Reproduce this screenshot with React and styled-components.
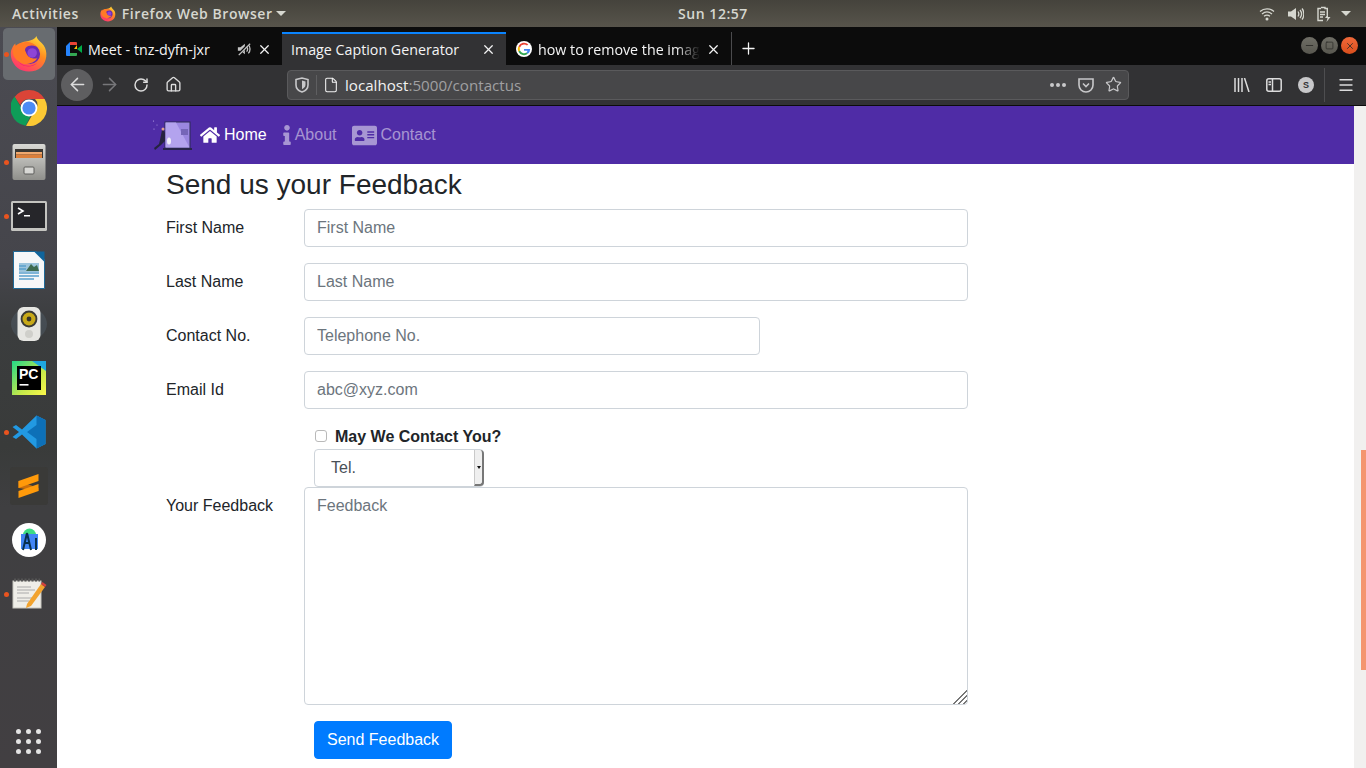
import styled, { createGlobalStyle } from "styled-components";
import { FaHome, FaInfo, FaAddressCard } from "react-icons/fa";
import {
  ArrowLeft,
  ArrowRight,
  RotateCw,
  House,
  File,
  Star,
  Menu,
  Plus,
  X,
  Minus,
  Square,
} from "lucide-react";

const Global = createGlobalStyle`
  html, body {
    margin: 0;
    height: 100%;
    overflow: hidden;
    font-family: "Liberation Sans", Arial, sans-serif;
    background: #fff;
  }
  * { box-sizing: border-box; }
`;

const Screen = styled.div`
  width: 1366px;
  height: 768px;
  display: flex;
  flex-direction: column;
  overflow: hidden;
`;

const TopBar = styled.div`
  height: 27px;
  flex: none;
  display: grid;
  grid-template-columns: 666px auto 1fr;
  align-items: center;
  padding: 0 12px;
  background: linear-gradient(#45433c, #57544b);
  color: #d6d7d0;
  font: 600 14px "Open Sans", sans-serif;
  letter-spacing: 0.55px;
`;

const TopLeft = styled.div`
  display: flex;
  align-items: center;
`;

const AppMenu = styled.div`
  display: flex;
  align-items: center;
  gap: 6px;
  margin-left: 21px;
`;

const Caret = styled.span`
  width: 0;
  height: 0;
  margin-left: ${(p) => p.$gap || 0}px;
  border-left: 5px solid transparent;
  border-right: 5px solid transparent;
  border-top: 5px solid #d6d7d0;
`;

const Tray = styled.div`
  display: flex;
  align-items: center;
  justify-content: flex-end;
  gap: 13px;
  padding-right: 3px;
`;

const Desktop = styled.div`
  flex: 1;
  display: flex;
  min-height: 0;
`;

const Dock = styled.div`
  width: 57px;
  flex: none;
  display: flex;
  flex-direction: column;
  align-items: center;
  background: linear-gradient(
    #4b4b52 0,
    #45454b 240px,
    #3b3d3e 300px,
    #393b3a 420px,
    #3f3f41 480px,
    #423f42 100%
  );
`;

const DockItem = styled.div`
  position: relative;
  width: 52px;
  height: 54px;
  flex: none;
  display: flex;
  align-items: center;
  justify-content: center;
  border-radius: 5px;
  border-top: 1px solid transparent;
  border-bottom: 1px solid transparent;
  background: ${(p) => (p.$active ? "#686c70" : "transparent")};
  background-clip: padding-box;
`;

const RunDot = styled.span`
  position: absolute;
  left: 1px;
  top: 24px;
  width: 5px;
  height: 5px;
  border-radius: 50%;
  background: #e9541f;
`;

const AppGrid = styled.div`
  margin-top: auto;
  margin-bottom: 14px;
  display: grid;
  grid-template-columns: repeat(3, 5px);
  gap: 5px;
`;

const GridDot = styled.span`
  width: 5px;
  height: 5px;
  border-radius: 50%;
  background: #e4e4e4;
`;

const Browser = styled.div`
  flex: 1;
  min-width: 0;
  display: flex;
  flex-direction: column;
`;

const TabStrip = styled.div`
  height: 38px;
  flex: none;
  display: flex;
  padding-top: 5px;
  background: #0c0c0c;
  color: #f4f4f4;
  font: 400 14.25px "Open Sans", sans-serif;
`;

const Tab = styled.div`
  width: ${(p) => p.$width}px;
  flex: none;
  display: flex;
  align-items: center;
  padding: 0 10px 1px ${(p) => p.$left || 9}px;
  gap: 6px;
  white-space: nowrap;
  background: ${(p) => (p.$active ? "#323234" : "transparent")};
  border-top: 2px solid ${(p) => (p.$active ? "#0a84ff" : "transparent")};
`;

const TabTitle = styled.span`
  flex: 1;
  overflow: hidden;
  min-width: 0;
  ${(p) =>
    p.$fade &&
    "mask-image: linear-gradient(to right, #000 85%, transparent 100%);"}
`;

const TabDivider = styled.span`
  width: 1px;
  align-self: stretch;
  background: #4b4b4d;
`;

const NewTab = styled.span`
  margin-left: 7px;
  display: flex;
  align-items: center;
`;

const WindowButtons = styled.div`
  margin-left: auto;
  padding: 0 8px 6px 0;
  display: flex;
  align-items: center;
  gap: 3px;
`;

const WindowButton = styled.span`
  width: 17px;
  height: 17px;
  border-radius: 50%;
  display: flex;
  align-items: center;
  justify-content: center;
  color: #2e2d29;
  background: ${(p) =>
    p.$close
      ? "linear-gradient(#f0693a, #d84e1c)"
      : "linear-gradient(#6f6e66, #58574f)"};
`;

const Toolbar = styled.div`
  height: 41px;
  flex: none;
  display: flex;
  align-items: center;
  padding: 0 0 1px 4px;
  background: #323234;
  border-bottom: 1px solid #0c0c0c;
  color: #dcdcdc;
`;

const ToolButton = styled.span`
  width: 32px;
  height: 32px;
  flex: none;
  display: flex;
  align-items: center;
  justify-content: center;
  border-radius: 50%;
  color: ${(p) => (p.$dim ? "#77777a" : "#dcdcdc")};
  background: ${(p) => (p.$round ? "#5e5e60" : "transparent")};
`;

const UrlBar = styled.div`
  width: 842px;
  height: 30px;
  margin: 0 97px 0 98px;
  flex: none;
  display: flex;
  align-items: center;
  padding: 0 6px 0 7px;
  background: #474749;
  border: 1px solid #5a5a5c;
  border-radius: 4px;
  font: 400 15.15px "Open Sans", sans-serif;
  color: #f2f2f2;
`;

const UrlDivider = styled.span`
  width: 1px;
  height: 20px;
  margin: 0 6px 0 7px;
  background: #5f5f61;
`;

const Host = styled.span`
  margin-left: 6px;
`;

const UrlPath = styled.span`
  color: #a0a0a2;
`;

const UrlActions = styled.div`
  margin-left: auto;
  display: flex;
  align-items: center;
  gap: 11px;
  color: #c8c8ca;
`;

const Dots = styled.span`
  width: 17px;
  display: flex;
  gap: 2px;
`;

const Dot = styled.i`
  width: 4px;
  height: 4px;
  border-radius: 50%;
  background: #c8c8ca;
`;

const Avatar = styled.span`
  width: 16px;
  height: 16px;
  border-radius: 50%;
  display: flex;
  align-items: center;
  justify-content: center;
  background: #c8c8ca;
  color: #323234;
  font: 700 9px "Liberation Sans", sans-serif;
`;

const ToolDivider = styled.span`
  width: 1px;
  height: 34px;
  margin: 0 5px 0 2px;
  background: #4e4e50;
`;

const PageArea = styled.div`
  flex: 1;
  min-height: 0;
  display: flex;
`;

const Page = styled.main`
  flex: 1;
  min-width: 0;
  overflow: hidden;
`;

const Scrollbar = styled.div`
  width: 12px;
  flex: none;
  padding-top: 344px;
  padding-left: 7px;
  background: #f1f0ef;
`;

const ScrollThumb = styled.div`
  width: 5px;
  height: 220px;
  background: #f49570;
`;

const NavBar = styled.nav`
  height: 58px;
  display: flex;
  align-items: center;
  padding-left: 95px;
  background: #4f2ca6;
`;

const NavLink = styled.a`
  display: flex;
  align-items: center;
  gap: ${(p) => p.$gap}px;
  margin-left: ${(p) => p.$left}px;
  font-size: 16px;
  color: ${(p) => (p.$active ? "#fff" : "rgba(255, 255, 255, 0.5)")};
`;

const InfoGlyph = styled(FaInfo)`
  width: 8px;
  height: 20px;
`;

const Content = styled.div`
  padding-left: 109px;
  width: 911px;
  color: #212529;
`;

const Heading = styled.h2`
  margin: 0;
  height: 45px;
  padding-top: 4px;
  font-size: 28px;
  font-weight: 400;
  line-height: 34px;
`;

const FormRow = styled.div`
  display: flex;
  margin-bottom: ${(p) => p.$bottom ?? 16}px;
`;

const Label = styled.label`
  width: 138px;
  flex: none;
  padding-top: 7px;
  font-size: 16px;
  line-height: 24px;
`;

const TextInput = styled.input`
  width: ${(p) => p.$width || 664}px;
  height: 38px;
  padding: 6px 12px;
  border: 1px solid #ced4da;
  border-radius: 4px;
  font: 400 16px "Liberation Sans", sans-serif;
  background: #fff;
  &::placeholder {
    color: #6c757d;
    opacity: 1;
  }
`;

const Feedback = styled(TextInput).attrs({ as: "textarea" })`
  height: 218px;
  resize: both;
  line-height: 24px;
  display: block;
  &::-webkit-resizer {
    background: linear-gradient(
      135deg,
      transparent 0 52%,
      #777 52% 59%,
      transparent 59% 69%,
      #777 69% 76%,
      transparent 76% 86%,
      #777 86% 93%,
      transparent 93%
    );
  }
`;

const CheckRow = styled.div`
  height: 24px;
  margin-left: 149px;
  display: flex;
  align-items: center;
  font-size: 16px;
  font-weight: 700;
`;

const Check = styled.input`
  width: 12px;
  height: 12px;
  margin: 0 8px 2px 0;
  padding: 0;
  appearance: none;
  border: 1px solid #b9b9b9;
  border-radius: 3px;
  background: #fff;
`;

const SelectBox = styled.div`
  width: 170px;
  height: 38px;
  margin-left: 148px;
  display: flex;
  align-items: center;
  padding-left: 16px;
  border: 1px solid #ced4da;
  border-radius: 4px;
  font-size: 16px;
  color: #495057;
  position: relative;
`;

const SelectArrow = styled.span`
  position: absolute;
  right: -1px;
  top: 0;
  bottom: 0;
  width: 10px;
  display: flex;
  align-items: center;
  justify-content: center;
  background: #efefef;
  border-left: 1px solid #c9c9c9;
  border-right: 2px solid #777;
  border-bottom: 2px solid #777;
  border-radius: 0 4px 4px 0;
  &::after {
    content: "";
    border-left: 2.5px solid transparent;
    border-right: 2.5px solid transparent;
    border-top: 3px solid #111;
  }
`;

const SendButton = styled.button`
  display: block;
  height: 38px;
  margin: 16px 0 0 148px;
  padding: 0 12px;
  border: 1px solid #007bff;
  border-radius: 4px;
  background: #007bff;
  color: #fff;
  font: 400 16px "Liberation Sans", sans-serif;
`;

const PyCharmBadge = styled.text`
  font: 700 14px "Liberation Sans", sans-serif;
  fill: #fff;
`;

function FirefoxIcon({ size = 38 }) {
  const id = `fx${size}`;
  return (
    <svg width={size} height={size} viewBox="0 0 36 36">
      <defs>
        <linearGradient id={id} x1="0.8" y1="0" x2="0.2" y2="1">
          <stop offset="0" stopColor="#ffdf3a" />
          <stop offset="0.4" stopColor="#ff8a1f" />
          <stop offset="1" stopColor="#ff2d78" />
        </linearGradient>
      </defs>
      <path
        d="M25 1c1 4 4 5 7 9 4 6 3 15-2 20-6 6-17 6-23 1C2 27 0 21 1 15c1-3 2-5 4-7 0 2 1 3 2 3 2-3 5-5 9-5 4-1 8-2 9-5z"
        fill={`url(#${id})`}
      />
      <circle cx="19" cy="18" r="9.500" fill="#6a2bb3" />
      <path
        d="M3 13c2-3 5-6 10-6 5-1 10 1 12 4-4-2-8-1-10 1-1 1-1 3 0 4 1 4 5 7 11 6-4 6-13 7-18 3-4-3-6-7-5-12z"
        fill="#ff7a26"
      />
      <path d="M7 24c4 6 13 7 19 2-4 5-14 6-19-2z" fill="#f5187a" />
      <circle cx="21" cy="17" r="4.500" fill="#8d45d6" />
    </svg>
  );
}

function ChromeIcon() {
  return (
    <svg width="36" height="36" viewBox="0 0 36 36">
      <path d="M18 0a18 18 0 0 1 15.6 9H18a9 9 0 0 0-8.6 6.5L3.6 7A18 18 0 0 1 18 0z" fill="#db4437" />
      <path d="M3.6 6.500 12 21a8 8 0 0 0 7.500 5.200L14.600 35.700A18 18 0 0 1 3.600 6.500z" fill="#0f9d58" />
      <path d="M33.600 9A18 18 0 0 1 15 35.800L23.500 21A8 8 0 0 0 24 9z" fill="#fcc934" />
      <circle cx="18" cy="18" r="8.400" fill="#fff" />
      <circle cx="18" cy="18" r="6.600" fill="#4c8bf5" />
    </svg>
  );
}

function FilesIcon() {
  return (
    <svg width="34" height="36" viewBox="0 0 34 36">
      <defs>
        <linearGradient id="cabinet" x1="0" y1="0" x2="0" y2="1">
          <stop offset="0" stopColor="#d9d9d5" />
          <stop offset="1" stopColor="#8f8f8b" />
        </linearGradient>
      </defs>
      <rect x="0.500" y="0" width="33" height="36" rx="2" fill="url(#cabinet)" />
      <rect x="3" y="5" width="28" height="9" fill="#3a3733" />
      <rect x="4" y="8" width="26" height="2.500" fill="#f0a86e" />
      <rect x="4" y="10.500" width="26" height="3.500" fill="#dc7f3a" />
      <rect x="12" y="23" width="10" height="7" rx="1" fill="#d8d8d5" stroke="#5c5c5a" />
    </svg>
  );
}

function TerminalIcon() {
  return (
    <svg width="36" height="30" viewBox="0 0 36 30">
      <rect width="36" height="30" rx="1.500" fill="#c4c4c0" />
      <rect x="2" y="2" width="32" height="25" fill="#26262a" />
      <path d="M7 7l5 3-5 3" fill="none" stroke="#fff" strokeWidth="1.600" />
      <rect x="13" y="14" width="6" height="1.500" fill="#fff" />
    </svg>
  );
}

function WriterIcon() {
  return (
    <svg width="32" height="38" viewBox="0 0 32 38">
      <path d="M0.500 0.500H23L31.500 9V37.500H0.500z" fill="#f6f7f8" stroke="#1f6a98" />
      <path d="M21 0.500H31.500V11z" fill="#10659c" />
      <rect x="6" y="12" width="20" height="9" fill="#9cc4dc" />
      <path d="M13 20l5-7 3 3 3-2 2 6z" fill="#3e6a4f" />
      <path d="M6 15h7M6 18h7M6 22h20M6 25h20M6 28h15" stroke="#5aa0cc" strokeWidth="1.600" />
    </svg>
  );
}

function SpeakerIcon() {
  return (
    <svg width="38" height="36" viewBox="0 0 38 36">
      <ellipse cx="19" cy="18" rx="18" ry="16" fill="#5a6a78" opacity="0.350" />
      <rect x="7.500" y="1" width="23" height="34" rx="6" fill="#e6e6e2" />
      <circle cx="19" cy="13" r="8.400" fill="#3a3a36" />
      <circle cx="19" cy="13" r="6.500" fill="#c7a918" />
      <circle cx="19" cy="13" r="2.400" fill="#38352a" />
      <circle cx="19" cy="28" r="4" fill="#cfcfca" />
    </svg>
  );
}

function PyCharmIcon() {
  return (
    <svg width="34" height="34" viewBox="0 0 34 34">
      <defs>
        <linearGradient id="pc" x1="0" y1="0" x2="1" y2="1">
          <stop offset="0" stopColor="#21d789" />
          <stop offset="0.600" stopColor="#c5e94a" />
          <stop offset="1" stopColor="#fcf84a" />
        </linearGradient>
      </defs>
      <rect width="34" height="34" fill="url(#pc)" />
      <path d="M20 0h14v10z" fill="#1ea7df" />
      <rect x="5" y="5" width="24" height="24" fill="#000" />
      <PyCharmBadge x="7" y="18">PC</PyCharmBadge>
      <rect x="7.500" y="23" width="9" height="1.600" fill="#fff" />
    </svg>
  );
}

function VSCodeIcon() {
  return (
    <svg width="34" height="34" viewBox="0 0 34 34">
      <path d="M24.500 0.500 33.500 5V29l-9 4.500L10 19.500l-6 4.600L0.500 22 7 17 0.500 12 4 9.900l6 4.600z" fill="#2299e2" />
      <path d="M24.500 0.500 33.500 5V29l-9 4.500V24L15 17l9.500-7z" fill="#0d70b8" />
    </svg>
  );
}

function SublimeIcon() {
  return (
    <svg width="38" height="38" viewBox="0 0 38 38">
      <rect width="38" height="38" rx="3" fill="#3a3a38" />
      <path d="M8.500 14 28.500 21V24L8.500 21z" fill="#c96f0c" />
      <path d="M8.500 14 28.500 7V14L8.500 21z" fill="#ff9a0a" />
      <path d="M8.500 24 28.500 17V24L8.500 31z" fill="#ff9a0a" />
    </svg>
  );
}

function StudioIcon() {
  return (
    <svg width="34" height="34" viewBox="0 0 34 34">
      <circle cx="17" cy="17" r="17" fill="#fff" />
      <path d="M11 12a6.500 6.500 0 0 1 13 0z" fill="#3ddc84" />
      <rect x="9" y="11" width="17" height="15" fill="#4285f4" />
      <path d="M15 10 11 27M15 10l4 17M12 20h6M24 15v12" stroke="#08304f" strokeWidth="2" fill="none" />
    </svg>
  );
}

function GeditIcon() {
  return (
    <svg width="36" height="32" viewBox="0 0 36 32">
      <rect x="2" y="3" width="28" height="27" fill="#efeee8" stroke="#c8c7bf" />
      <path d="M3 2h26" stroke="#555" strokeWidth="3" strokeDasharray="2 1.500" />
      <path d="M6 9h14M6 12h18M6 15h12M6 20h16M6 23h12" stroke="#aaa" strokeWidth="1" />
      <path d="M16 26 30 6l4 3-14 19-5 2z" fill="#f2a32e" />
      <path d="M30 6l1.500-2 4 3-1.500 2z" fill="#d3413c" />
    </svg>
  );
}

function MeetIcon() {
  return (
    <svg width="16" height="14" viewBox="0 0 16 14">
      <path d="M0 4 4 0v14H1a1 1 0 0 1-1-1z" fill="#2684fc" />
      <path d="M4 0h6a1 1 0 0 1 1 1v2H4z" fill="#ea4335" />
      <path d="M4 11h7v2a1 1 0 0 1-1 1H4z" fill="#34a853" />
      <path d="M4 3h7v8H4z" fill="#0c0c0c" />
      <path d="M11 7l5-4v8z" fill="#00ac47" />
      <path d="M11 3v4H8z" fill="#fbbc04" />
    </svg>
  );
}

function GoogleIcon() {
  return (
    <svg width="16" height="16" viewBox="0 0 16 16">
      <circle cx="8" cy="8" r="8" fill="#fff" />
      <path d="M8 3.500a4.500 4.500 0 0 1 3 1.100l1.300-1.300A6.300 6.300 0 0 0 2.400 5.200L4 6.400A4.400 4.400 0 0 1 8 3.500z" fill="#ea4335" />
      <path d="M2.400 5.200a6.300 6.300 0 0 0 0 5.600L4 9.500a4.400 4.400 0 0 1 0-3.100z" fill="#fbbc05" />
      <path d="M2.400 10.800a6.300 6.300 0 0 0 9.600 1.900l-1.500-1.200A4.400 4.400 0 0 1 4 9.500z" fill="#34a853" />
      <path d="M14.200 8H8v1.800h3.500a3 3 0 0 1-1 1.700l1.500 1.200A6.200 6.200 0 0 0 14.200 8z" fill="#4285f4" />
    </svg>
  );
}

function MutedIcon() {
  return (
    <svg width="14" height="14" viewBox="0 0 16 16" fill="#c4c4c4">
      <path d="M1 6h3l5-4v12l-5-4H1z" />
      <path d="M11 5c1.500 1.500 1.500 4.500 0 6M13 3c2.500 2.500 2.500 7.500 0 10" fill="none" stroke="#c4c4c4" strokeWidth="1.500" />
      <path d="M1 15 15 1" stroke="#0c0c0c" strokeWidth="3" />
      <path d="M2 15 15 2" stroke="#c4c4c4" strokeWidth="1.500" />
    </svg>
  );
}

function ShieldIcon() {
  return (
    <svg width="14" height="16" viewBox="0 0 14 16" fill="none" stroke="#c8c8ca" strokeWidth="1.600">
      <path d="M1 2.500 7 1l6 1.500V8c0 3.500-3 6-6 7-3-1-6-3.500-6-7z" />
      <path d="M7 3.500 10.500 4.500V8c0 2-2 3.500-3.500 4.300z" fill="#c8c8ca" stroke="none" />
    </svg>
  );
}

function PocketIcon() {
  return (
    <svg width="16" height="16" viewBox="0 0 16 16" fill="none" stroke="#c8c8ca" strokeWidth="1.600">
      <path d="M1 2h14v6a7 7 0 0 1-14 0z" />
      <path d="M5 6.500 8 9.500l3-3" />
    </svg>
  );
}

function LibraryIcon() {
  return (
    <svg width="16" height="14" viewBox="0 0 16 14" fill="none" stroke="#dcdcdc" strokeWidth="1.500">
      <path d="M1 0v14M4.500 0v14M8 0v14M10.500 0l4.500 14" />
    </svg>
  );
}

function SidebarIcon() {
  return (
    <svg width="16" height="14" viewBox="0 0 16 14" fill="none" stroke="#dcdcdc" strokeWidth="1.500">
      <rect x="0.800" y="0.800" width="14.400" height="12.400" rx="2" />
      <path d="M6.500 1v12M2.500 4h2.500M2.500 6.500h2.500" />
    </svg>
  );
}

function WifiIcon() {
  return (
    <svg width="16" height="14" viewBox="0 0 16 14" fill="none" stroke="#d6d7d0" strokeWidth="1.300">
      <path d="M1 4.500c4-3.500 10-3.500 14 0M3 7c3-2.500 7-2.500 10 0M5 9.300c2-1.500 4-1.500 6 0" />
      <circle cx="8" cy="12" r="1.500" fill="#d6d7d0" stroke="none" />
    </svg>
  );
}

function SoundIcon() {
  return (
    <svg width="16" height="14" viewBox="0 0 16 14" fill="none" stroke="#d6d7d0" strokeWidth="1.300">
      <path d="M0 4.500h3L8 1v12L3 9.500H0z" fill="#d6d7d0" stroke="none" />
      <path d="M10 4.500c1 1.500 1 3.500 0 5M12 3c2 2.500 2 5.500 0 8M14 1.500c2.500 3 2.500 8 0 11" />
    </svg>
  );
}

function BatteryIcon() {
  return (
    <svg width="14" height="16" viewBox="0 0 14 16" fill="none" stroke="#d6d7d0" strokeWidth="1.400">
      <path d="M4 1.500h4v1h2.300v7M6 14.500H1V2.500h3" />
      <path d="M3 6h5M3 8.500h5M3 11h3" />
      <path d="M11 8l-3 4h2.500L9.500 16l4-5H11z" fill="#d6d7d0" stroke="none" />
    </svg>
  );
}

function LogoIcon() {
  return (
    <svg width="40" height="32" viewBox="0 0 40 32">
      <circle cx="1.500" cy="2" r="0.600" fill="#b9a5e8" />
      <circle cx="5" cy="6" r="0.500" fill="#b9a5e8" />
      <circle cx="2" cy="10" r="0.600" fill="#b9a5e8" />
      <rect x="13" y="3" width="25" height="26" fill="#9a87e0" stroke="#2d2b55" />
      <path d="M13.500 3.500H24L37.500 28.500H13.500z" fill="#b3a3ee" />
      <rect x="29" y="10" width="7" height="6" fill="#7566b8" />
      <ellipse cx="17" cy="22" rx="2" ry="3.500" fill="#f0eef8" />
      <rect x="11" y="29" width="29" height="2" fill="#27254a" />
      <path d="M10 11c2 0 3 2 3 4v7l-4 4-6 5-1-2 5-4 1-4z" fill="#25233f" />
      <circle cx="11" cy="10" r="1.500" fill="#e0a090" />
    </svg>
  );
}

const dockApps = [
  { icon: <FirefoxIcon />, active: true, running: true },
  { icon: <ChromeIcon /> },
  { icon: <FilesIcon />, running: true },
  { icon: <TerminalIcon />, running: true },
  { icon: <WriterIcon /> },
  { icon: <SpeakerIcon /> },
  { icon: <PyCharmIcon /> },
  { icon: <VSCodeIcon />, running: true },
  { icon: <SublimeIcon /> },
  { icon: <StudioIcon /> },
  { icon: <GeditIcon />, running: true },
];

export default function App() {
  return (
    <Screen>
      <Global />
      <TopBar>
        <TopLeft>
          <span>Activities</span>
          <AppMenu>
            <FirefoxIcon size={16} />
            <span>Firefox Web Browser</span>
            <Caret $gap={-3} />
          </AppMenu>
        </TopLeft>
        <span>Sun 12:57</span>
        <Tray>
          <WifiIcon />
          <SoundIcon />
          <BatteryIcon />
          <Caret $gap={-3} />
        </Tray>
      </TopBar>
      <Desktop>
        <Dock>
          {dockApps.map((app, i) => (
            <DockItem key={i} $active={app.active}>
              {app.running && <RunDot />}
              {app.icon}
            </DockItem>
          ))}
          <AppGrid>
            {Array.from({ length: 9 }, (_, i) => (
              <GridDot key={i} />
            ))}
          </AppGrid>
        </Dock>
        <Browser>
          <TabStrip>
            <Tab $width={225}>
              <MeetIcon />
              <TabTitle>Meet - tnz-dyfn-jxr</TabTitle>
              <MutedIcon />
              <X size={15} strokeWidth={2} />
            </Tab>
            <Tab $width={224} $active>
              <TabTitle>Image Caption Generator</TabTitle>
              <X size={15} strokeWidth={2} />
            </Tab>
            <Tab $width={225} $left={10}>
              <GoogleIcon />
              <TabTitle $fade>how to remove the image</TabTitle>
              <X size={15} strokeWidth={2} />
            </Tab>
            <TabDivider />
            <NewTab>
              <Plus size={19} strokeWidth={1.6} />
            </NewTab>
            <WindowButtons>
              <WindowButton>
                <Minus size={11} />
              </WindowButton>
              <WindowButton>
                <Square size={9} />
              </WindowButton>
              <WindowButton $close>
                <X size={10} />
              </WindowButton>
            </WindowButtons>
          </TabStrip>
          <Toolbar>
            <ToolButton $round>
              <ArrowLeft size={21} strokeWidth={1.7} />
            </ToolButton>
            <ToolButton $dim>
              <ArrowRight size={21} strokeWidth={1.7} />
            </ToolButton>
            <ToolButton>
              <RotateCw size={16} strokeWidth={2.2} />
            </ToolButton>
            <ToolButton>
              <House size={17} strokeWidth={1.9} />
            </ToolButton>
            <UrlBar>
              <ShieldIcon />
              <UrlDivider />
              <File size={16} strokeWidth={1.6} />
              <Host>
                localhost<UrlPath>:5000/contactus</UrlPath>
              </Host>
              <UrlActions>
                <Dots>
                  <Dot />
                  <Dot />
                  <Dot />
                </Dots>
                <PocketIcon />
                <Star size={17} strokeWidth={1.7} />
              </UrlActions>
            </UrlBar>
            <ToolButton>
              <LibraryIcon />
            </ToolButton>
            <ToolButton>
              <SidebarIcon />
            </ToolButton>
            <ToolButton>
              <Avatar>S</Avatar>
            </ToolButton>
            <ToolDivider />
            <ToolButton>
              <Menu size={18} strokeWidth={1.8} />
            </ToolButton>
          </Toolbar>
          <PageArea>
            <Page>
              <NavBar>
                <LogoIcon />
                <NavLink $active $left={8} $gap={4}>
                  <FaHome size={20} />
                  Home
                </NavLink>
                <NavLink $left={16} $gap={4}>
                  <InfoGlyph />
                  About
                </NavLink>
                <NavLink $left={15} $gap={4}>
                  <FaAddressCard size={25} />
                  Contact
                </NavLink>
              </NavBar>
              <Content>
                <Heading>Send us your Feedback</Heading>
                <FormRow>
                  <Label>First Name</Label>
                  <TextInput placeholder="First Name" />
                </FormRow>
                <FormRow>
                  <Label>Last Name</Label>
                  <TextInput placeholder="Last Name" />
                </FormRow>
                <FormRow>
                  <Label>Contact No.</Label>
                  <TextInput $width={456} placeholder="Telephone No." />
                </FormRow>
                <FormRow>
                  <Label>Email Id</Label>
                  <TextInput placeholder="abc@xyz.com" />
                </FormRow>
                <CheckRow>
                  <Check type="checkbox" />
                  May We Contact You?
                </CheckRow>
                <SelectBox>
                  Tel.
                  <SelectArrow />
                </SelectBox>
                <FormRow $bottom={0}>
                  <Label>Your Feedback</Label>
                  <Feedback placeholder="Feedback" />
                </FormRow>
                <SendButton>Send Feedback</SendButton>
              </Content>
            </Page>
            <Scrollbar>
              <ScrollThumb />
            </Scrollbar>
          </PageArea>
        </Browser>
      </Desktop>
    </Screen>
  );
}
